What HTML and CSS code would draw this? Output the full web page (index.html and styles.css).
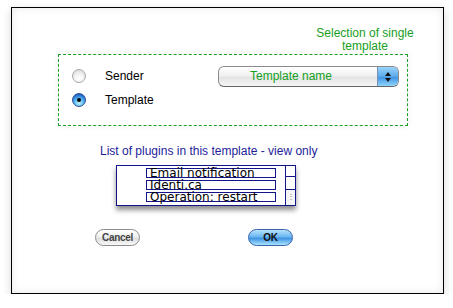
FILE: index.html
```html
<!DOCTYPE html>
<html>
<head>
<meta charset="utf-8">
<link rel="stylesheet" href="styles.css">
</head>
<body>
<div class="frame">
  <div class="note">Selection of single<br>template</div>
  <div class="choice">
    <div class="radios">
      <div class="radio-row"><span class="radio"></span><span class="radio-label">Sender</span></div>
      <div class="radio-row"><span class="radio on"></span><span class="radio-label">Template</span></div>
    </div>
    <div class="popup">
      <span class="popup-text">Template name</span>
      <span class="popup-arrows">
        <svg width="8" height="12" viewBox="0 0 8 12"><polygon points="4,1 7,5 1,5" fill="#111"/><polygon points="1,7 7,7 4,11" fill="#111"/></svg>
      </span>
    </div>
  </div>
  <div class="list-title">List of plugins in this template - view only</div>
  <div class="listbox">
    <div class="items">
      <div class="item">Email notification</div>
      <div class="item">Identi.ca</div>
      <div class="item">Operation: restart</div>
    </div>
    <div class="scroll">
      <div class="sc-a"></div>
      <div class="sc-b"></div>
      <div class="sc-c">⋮</div>
    </div>
  </div>
  <div class="buttons">
    <span class="btn cancel">Cancel</span>
    <span class="btn ok">OK</span>
  </div>
</div>
</body>
</html>
```
FILE: styles.css
```css
html, body {
  margin: 0;
  padding: 0;
  background: #ffffff;
}
body {
  font-family: "Liberation Sans", Arial, sans-serif;
  font-size: 12px;
}
.frame {
  margin: 7px 0 0 11px;
  width: 433px;
  height: 287px;
  box-sizing: border-box;
  border: 1px solid #000;
  background: #fff;
  box-shadow: 0 3px 9px rgba(0,0,0,0.16), inset 0 0 9px rgba(0,0,0,0.09);
  display: flex;
  flex-direction: column;
}
.note {
  align-self: flex-end;
  margin: 19px 27px 0 0;
  width: 102px;
  text-align: center;
  color: #17a01f;
  line-height: 13px;
}
.choice {
  margin: 1px 0 0 46px;
  width: 350px;
  height: 72px;
  box-sizing: border-box;
  border: 1px dashed #1aa024;
  box-shadow: 0 0 6px rgba(0,0,0,0.07);
  display: flex;
  align-items: flex-start;
}
.radios {
  padding: 14px 0 0 13px;
  display: flex;
  flex-direction: column;
  gap: 10px;
}
.radio-row {
  display: flex;
  align-items: center;
  height: 14px;
}
.radio {
  width: 14px;
  height: 14px;
  box-sizing: border-box;
  border-radius: 50%;
  border: 1px solid #a8a8a8;
  background: radial-gradient(circle at 50% 70%, #ffffff 0%, #f2f2f2 45%, #d0d0d0 100%);
  position: relative;
}
.radio.on {
  border-color: #2b4f98;
  background: radial-gradient(circle at 50% 75%, #c6f0ff 0%, #5cbcf3 40%, #1f63c8 78%, #16378a 100%);
}
.radio.on::after {
  content: "";
  position: absolute;
  left: 4px;
  top: 4px;
  width: 4px;
  height: 4px;
  border-radius: 50%;
  background: #000;
}
.radio-label {
  margin-left: 19px;
  color: #000;
  font-size: 12px;
}
.popup {
  margin: 11px 8px 0 auto;
  width: 181px;
  height: 21px;
  box-sizing: border-box;
  border: 1px solid #8a8a8a;
  border-bottom-color: #666;
  border-radius: 6px;
  background: linear-gradient(#ffffff, #f1f1f1 45%, #e4e4e4 55%, #f6f6f6);
  display: flex;
  overflow: hidden;
}
.popup-text {
  flex: 1;
  text-align: center;
  color: #17a01f;
  line-height: 19px;
  padding-right: 14px;
}
.popup-arrows {
  width: 20px;
  border-left: 1px solid #7c8fb8;
  background: linear-gradient(#9ad4fb, #5aa9ea 50%, #3d8fe0 52%, #8fd6fc);
  display: flex;
  align-items: center;
  justify-content: center;
}
.list-title {
  margin: 18px 0 0 88px;
  color: #1d1d9a;
  line-height: 14px;
}
.listbox {
  margin: 7px 0 0 104px;
  width: 180px;
  height: 41px;
  box-sizing: border-box;
  border: 1px solid #14148a;
  background: #fff;
  box-shadow: 0 4px 5px rgba(0,0,0,0.45);
  display: flex;
}
.items {
  padding: 2px 0 0 29px;
  display: flex;
  flex-direction: column;
  gap: 2px;
}
.item {
  width: 130px;
  height: 10px;
  box-sizing: border-box;
  border: 1px solid #14148a;
  font-family: "DejaVu Sans", Verdana, sans-serif;
  font-size: 12px;
  line-height: 8px;
  padding-left: 3px;
  color: #000;
  white-space: nowrap;
  overflow: visible;
}
.scroll {
  margin-left: auto;
  width: 9px;
  border-left: 1px solid #14148a;
  display: flex;
  flex-direction: column;
}
.sc-a {
  height: 10px;
  border-bottom: 1px solid #14148a;
}
.sc-b {
  height: 12px;
  border-bottom: 1px solid #14148a;
}
.sc-c {
  flex: 1;
  background: #f4f4f4;
  color: #888;
  font-size: 8px;
  line-height: 14px;
  text-align: center;
}
.buttons {
  margin: 23px 0 0 83px;
  display: flex;
  gap: 108px;
}
.btn {
  width: 45px;
  height: 17px;
  box-sizing: border-box;
  border-radius: 9px;
  font-size: 10px;
  font-weight: bold;
  text-align: center;
  line-height: 15px;
  letter-spacing: -0.3px;
  color: #222;
}
.cancel {
  border: 1px solid #8c8c8c;
  background: linear-gradient(#ffffff, #f0f0f0 45%, #dedede 55%, #f8f8f8);
  color: #444;
}
.ok {
  border: 1px solid #3a63a8;
  background: linear-gradient(#b6e2fd, #6ab7f1 45%, #3e93e3 55%, #a9e4ff);
  color: #111;
}
```
